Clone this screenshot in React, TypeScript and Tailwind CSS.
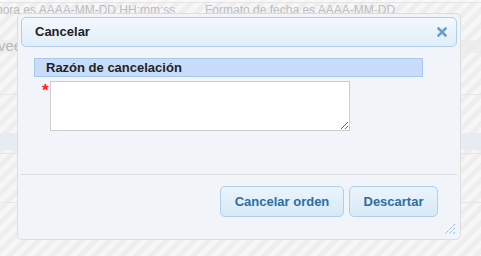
import { useState } from "react";

const FONT = "font-['Liberation_Sans',Arial,sans-serif]";

function CloseIcon() {
  return (
    <svg width="10" height="10" viewBox="0 0 10 10" aria-hidden="true">
      <path d="M1.5 1.5 L8.5 8.5 M8.5 1.5 L1.5 8.5" stroke="#6c9fcb" strokeWidth="2.6" strokeLinecap="square" />
    </svg>
  );
}

function ResizeGrip() {
  return (
    <svg width="12" height="12" viewBox="0 0 12 12" aria-hidden="true">
      <path d="M11 1 L1 11 M11 5 L5 11 M11 9 L9 11" stroke="#6c9fcb" strokeWidth="1" strokeDasharray="1 1" />
    </svg>
  );
}

function PageBehind() {
  return (
    <div className="flex flex-col text-[12px] text-[#bdbdbd]">
      <div className="h-[3px] border-b border-[#e4e4e4] bg-white/40" />
      <div className="flex h-[14px] items-center">
        <span className="ml-[-4px] w-[209px] whitespace-nowrap">hora es AAAA-MM-DD HH:mm:ss</span>
        <span className="whitespace-nowrap">Formato de fecha es AAAA-MM-DD</span>
      </div>
      <div className="h-[23px]" />
      <div className="flex h-[13px] items-center bg-[#ebebeb]/70 text-[15px] text-[#b8b8b8]">
        <span className="ml-[-2px]">vee</span>
      </div>
      <div className="h-[42px] border-b border-[#e6e6e6]" />
      <div className="h-[38px]" />
      <div className="h-[17px] bg-[#e8ebf4]" />
      <div className="h-[4px] border-b border-[#e4e4e4]" />
      <div className="h-[49px] border-b border-[#e6e6e6]" />
    </div>
  );
}

export default function App() {
  const [reason, setReason] = useState("");

  return (
    <div
      className={`relative h-[256px] w-[481px] overflow-hidden bg-[repeating-linear-gradient(135deg,#f6f6f6_0px,#f6f6f6_5px,#eeeeee_5px,#eeeeee_10px)] ${FONT}`}
    >
      <PageBehind />

      <div className="absolute left-[17px] top-[13px] flex h-[227px] w-[444px] flex-col rounded-[5px] border border-[#dddddd] bg-[#f1f4f8] p-[3px]">
        <div className="flex h-[30px] items-center justify-between rounded-[5px] border border-[#aed0ea] bg-[linear-gradient(#f3f8fd,#e0edf8)] pl-[13px] pr-[9px]">
          <span className="text-[13px] font-bold text-[#222222]">Cancelar</span>
          <CloseIcon />
        </div>

        <div className="flex h-[127px] flex-col pl-[13px] pt-[11px]">
          <div className="flex h-[19px] w-[389px] items-center border border-[#a9c8ef] bg-[#c8ddf9] pl-[11px] text-[13px] font-bold text-[#222222]">
            Razón de cancelación
          </div>
          <div className="mt-[4px] flex">
            <span className="ml-[8px] mt-[1px] w-[8px] text-[17px] font-bold leading-[17px] text-[#ff2020]">*</span>
            <textarea
              value={reason}
              onChange={(event) => setReason(event.target.value)}
              className="h-[50px] w-[300px] border border-[#cccccc] bg-white p-[2px] text-[13px] outline-none"
            />
          </div>
        </div>

        <div className="flex flex-1 flex-col border-t border-[#dddddd]">
          <div className="mt-[11px] flex justify-end gap-[5px] pr-[19px]">
            <button className="h-[31px] w-[124px] rounded-[5px] border border-[#aed0ea] bg-[linear-gradient(#ebf4fc,#d7e9f7)] text-[13px] font-bold text-[#2e6e9e]">
              Cancelar orden
            </button>
            <button className="h-[31px] w-[89px] rounded-[5px] border border-[#aed0ea] bg-[linear-gradient(#ebf4fc,#d7e9f7)] text-[13px] font-bold text-[#2e6e9e]">
              Descartar
            </button>
          </div>
          <div className="mt-auto flex justify-end pb-[1px] pr-[1px]">
            <ResizeGrip />
          </div>
        </div>
      </div>
    </div>
  );
}
